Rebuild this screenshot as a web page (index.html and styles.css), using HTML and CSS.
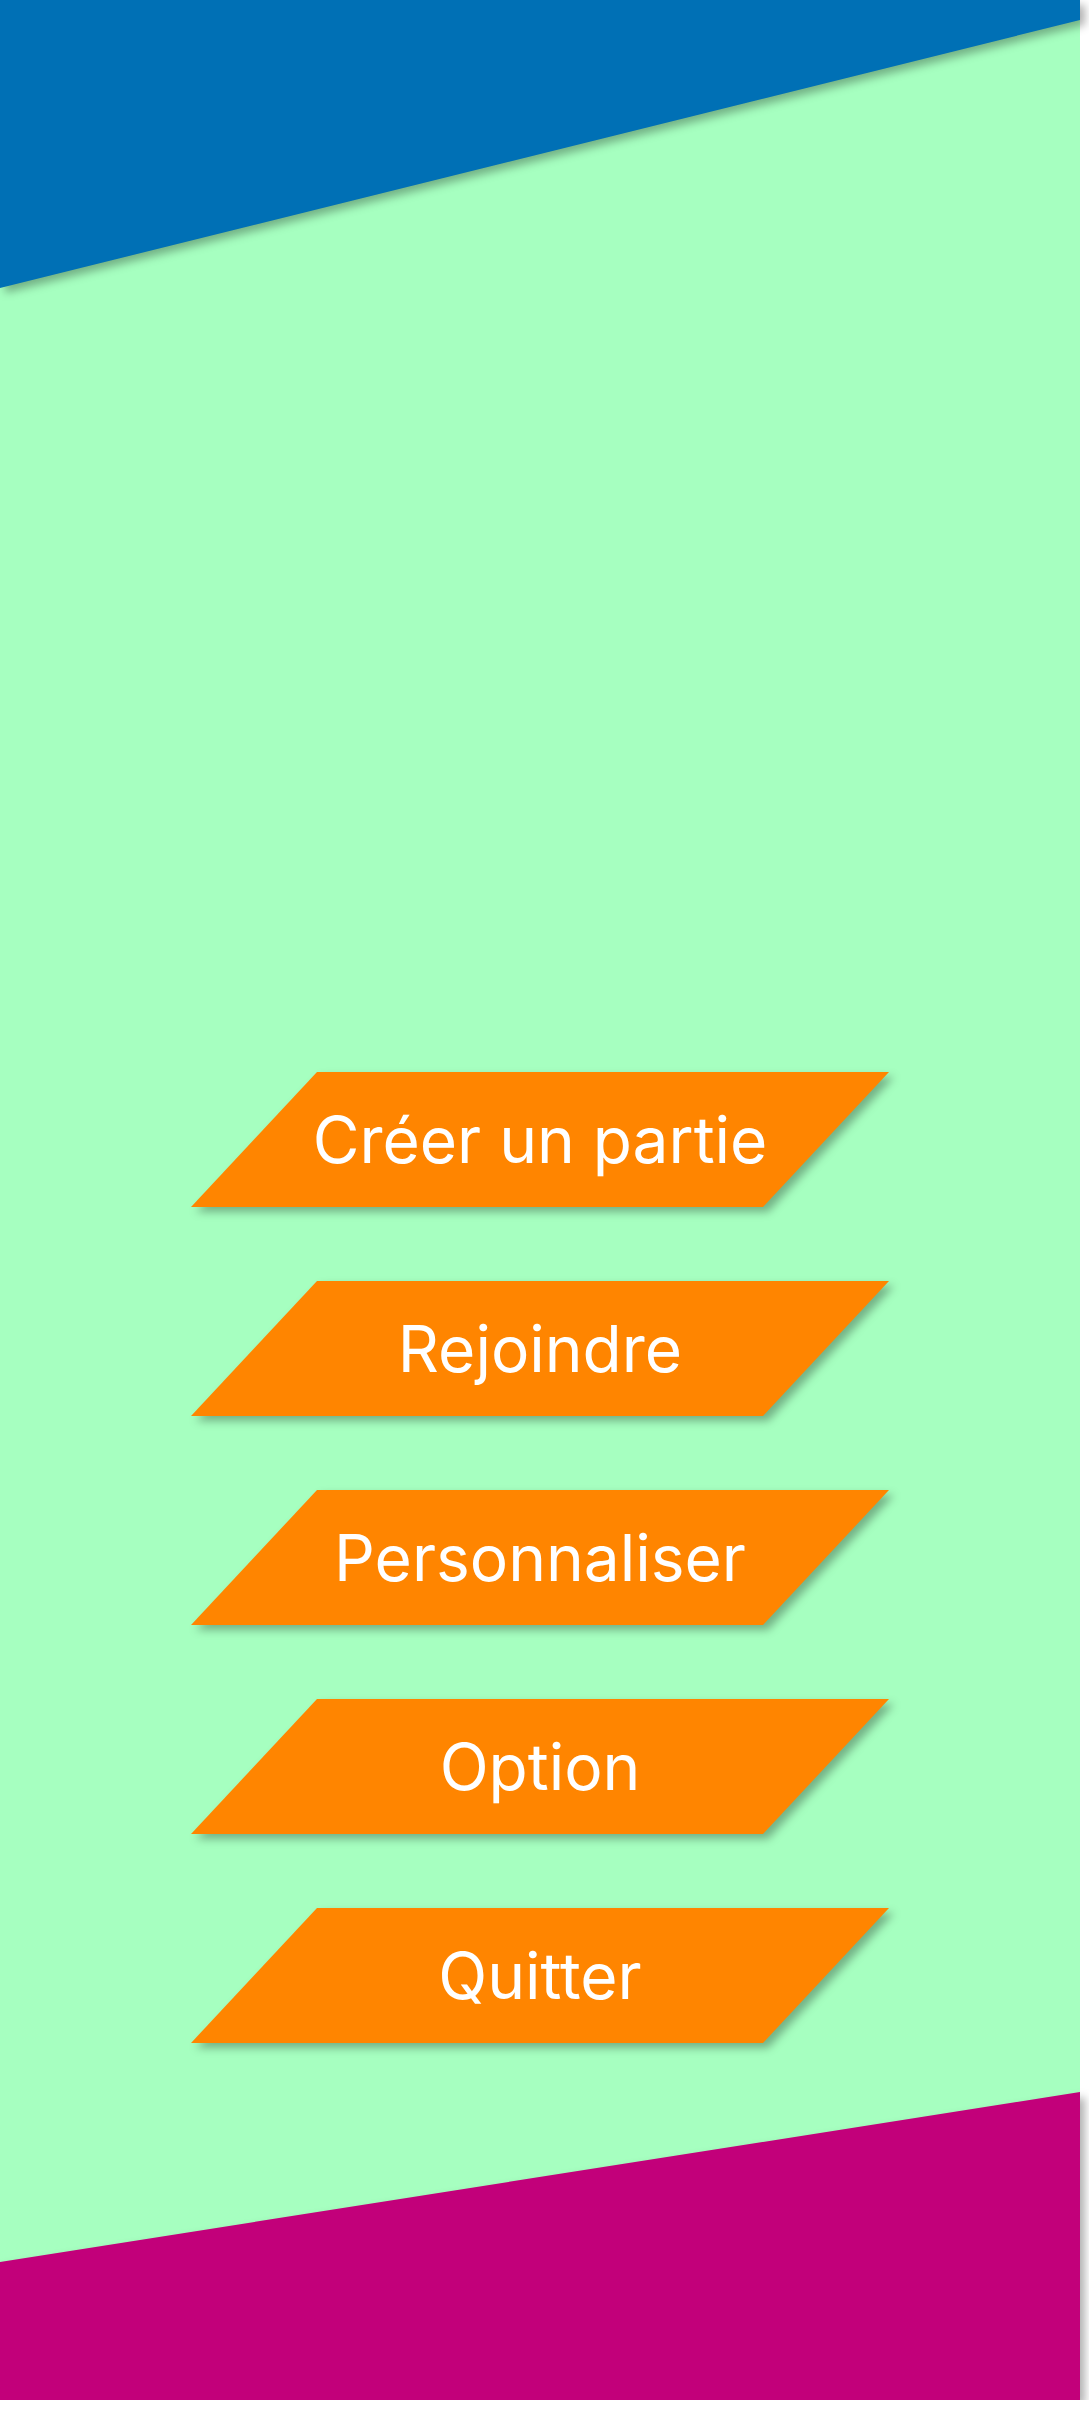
FILE: index.html
```html
<!DOCTYPE html>
<html lang="fr">
<head>
<meta charset="utf-8">
<title>Menu</title>
<link rel="stylesheet" href="styles.css">
</head>
<body>
<div class="screen">
  <div class="deco deco-top"><div class="shape shape-top"></div></div>
  <nav class="menu">
    <div class="btn"><div class="btn-shape">Créer un partie</div></div>
    <div class="btn"><div class="btn-shape">Rejoindre</div></div>
    <div class="btn"><div class="btn-shape">Personnaliser</div></div>
    <div class="btn"><div class="btn-shape">Option</div></div>
    <div class="btn"><div class="btn-shape">Quitter</div></div>
  </nav>
  <div class="deco deco-bottom"><div class="shape shape-bottom"></div></div>
</div>
</body>
</html>
```
FILE: styles.css
```css
html, body {
  margin: 0;
  padding: 0;
  background: #ffffff;
}
.screen {
  width: 1080px;
  height: 2400px;
  background: #a6ffc0;
  display: flex;
  flex-direction: column;
  font-family: Inter, "Noto Sans", sans-serif;
}
.deco {
  filter: drop-shadow(5px 5px 4px rgba(0, 0, 0, 0.3));
}
.shape {
  width: 100%;
  height: 100%;
}
.deco-top {
  height: 288px;
  flex: none;
}
.shape-top {
  background: #0070b5;
  clip-path: polygon(0 0, 100% 0, 100% 20px, 0 100%);
}
.deco-bottom {
  height: 308px;
  flex: none;
  margin-top: auto;
}
.shape-bottom {
  background: #c2007a;
  clip-path: polygon(0 170px, 100% 0, 100% 100%, 0 100%);
}
.menu {
  margin-top: 784px;
  display: flex;
  flex-direction: column;
  align-items: center;
  gap: 74px;
}
.btn {
  width: 698px;
  height: 135px;
  filter: drop-shadow(5px 5px 4px rgba(0, 0, 0, 0.3));
  cursor: pointer;
}
.btn-shape {
  width: 100%;
  height: 100%;
  background: #ff8500;
  clip-path: polygon(126px 0, 100% 0, calc(100% - 126px) 100%, 0 100%);
  display: flex;
  align-items: center;
  justify-content: center;
  color: #ffffff;
  font-size: 64px;
  font-weight: 400;
  font-variant-ligatures: none;
}
```
